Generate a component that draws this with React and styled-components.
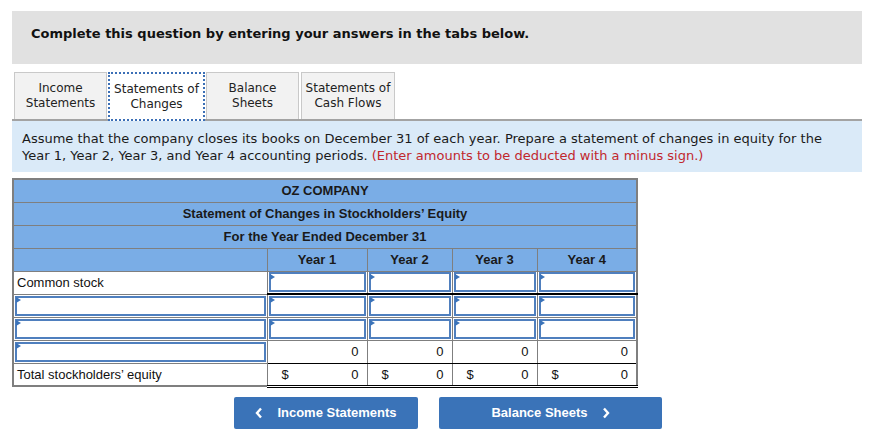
import React from "react";
import styled, { createGlobalStyle } from "styled-components";

const GlobalStyle = createGlobalStyle`
  body {
    margin: 0;
    background: #ffffff;
    font-family: "DejaVu Sans", Verdana, sans-serif;
    color: #1a1a1a;
  }
`;

const YEARS = ["Year 1", "Year 2", "Year 3", "Year 4"];
const COL_WIDTHS = [254, 100, 85, 85, 100];

//Layout components
const Page = styled.div`
  width: 850px;
  padding: 11px 0 0 12px;
`;

const Banner = styled.div`
  height: 53px;
  box-sizing: border-box;
  padding: 15px 0 0 19px;
  background-color: #e1e1e1;
  font-size: 13px;
  font-weight: bold;
  line-height: 16px;
  color: #111;
`;

const TabBar = styled.div`
  display: flex;
  align-items: flex-end;
  gap: 1px;
  margin-top: 8px;
  padding-left: 2px;
`;

const Tab = styled.div`
  width: ${(p) => p.$width}px;
  height: ${(p) => (p.$active ? 49 : 47)}px;
  box-sizing: border-box;
  display: flex;
  align-items: center;
  justify-content: center;
  text-align: center;
  font-size: 12px;
  line-height: 15px;
  color: #222;
  background-color: ${(p) => (p.$active ? "#ffffff" : "#f2f2f2")};
  border: ${(p) =>
    p.$active ? "2px dotted #3b6fb6" : "1px solid #c9c9c9"};
  border-bottom: ${(p) => (p.$active ? "2px dotted #3b6fb6" : "none")};
  margin-bottom: ${(p) => (p.$active ? "-2px" : "0")};
  position: relative;
  z-index: ${(p) => (p.$active ? 1 : 0)};
  margin-right: ${(p) => p.$gap || 0}px;
`;

const Instructions = styled.div`
  border-top: 2px solid #a3a3a3;
  background-color: #daeaf8;
  padding: 9px 10px 8px 10px;
  font-size: 13px;
  line-height: 17px;
  color: #1a1a1a;
`;

const Hint = styled.span`
  color: #c1272d;
`;

const Table = styled.table`
  margin-top: 6px;
  border-collapse: collapse;
  table-layout: fixed;
  width: 625px;
  font-family: "Liberation Sans", Arial, sans-serif;
  font-size: 13px;
  border: 2px solid #7f7f7f;
`;

const Row = styled.tr`
  height: 23px;
`;

const HeadCell = styled.th`
  padding: 0;
  background-color: #7aade6;
  border: 1px solid #7f7f7f;
  font-weight: bold;
  color: #1a1a1a;
  text-align: center;
`;

const LabelCell = styled.td`
  padding: 0 3px;
  border: 1px solid #7f7f7f;
  background: #fff;
  color: #111;
`;

const InputCell = styled.td`
  padding: 0 1px;
  border: 1px solid #7f7f7f;
  border-bottom: ${(p) => (p.$rule ? "2px solid #000" : "1px solid #7f7f7f")};
  background: #fff;
  position: relative;
`;

const Field = styled.div`
  height: 20px;
  box-sizing: border-box;
  border: 2px solid #4f7fbe;
  background: #fff;
`;

const Marker = styled.span`
  position: absolute;
  top: 2px;
  left: 2px;
  width: 0;
  height: 0;
  border-top: 3px solid transparent;
  border-bottom: 3px solid transparent;
  border-left: 5px solid #3b73b9;
`;

const AmountCell = styled.td`
  padding: 0 8px 0 14px;
  border: 1px solid #7f7f7f;
  border-bottom: ${(p) =>
    p.$double ? "3px double #000" : p.$single ? "1px solid #000" : "1px solid #7f7f7f"};
  background: #fff;
  color: #111;
`;

const Amount = styled.div`
  display: flex;
  justify-content: space-between;
`;

const ButtonRow = styled.div`
  display: flex;
  gap: 21px;
  margin-top: 9px;
  padding-left: 222px;
`;

const NavButton = styled.button`
  width: ${(p) => p.$width}px;
  height: 32px;
  display: flex;
  align-items: center;
  justify-content: center;
  gap: 14px;
  border: none;
  border-radius: 2px;
  background-color: #3a73b8;
  color: #fff;
  font-family: "Liberation Sans", Arial, sans-serif;
  font-size: 13px;
  font-weight: bold;
  cursor: pointer;
`;

const Chevron = ({ dir }) => (
  <svg width="8" height="12" viewBox="0 0 8 12">
    <polyline
      points={dir === "left" ? "6,1.5 2,6 6,10.5" : "2,1.5 6,6 2,10.5"}
      fill="none"
      stroke="#fff"
      strokeWidth="2.4"
    />
  </svg>
);

const EntryInput = ({ rule }) => (
  <InputCell $rule={rule}>
    <Field />
    <Marker />
  </InputCell>
);

function App() {
  return (
    <>
      <GlobalStyle />
      <Page>
        <Banner>
          Complete this question by entering your answers in the tabs below.
        </Banner>
        <TabBar>
          <Tab $width={93}>
            Income
            <br />
            Statements
          </Tab>
          <Tab $width={97} $active>
            Statements of
            <br />
            Changes
          </Tab>
          <Tab $width={93} $gap={1}>
            Balance
            <br />
            Sheets
          </Tab>
          <Tab $width={94}>
            Statements of
            <br />
            Cash Flows
          </Tab>
        </TabBar>
        <Instructions>
          Assume that the company closes its books on December 31 of each year.
          Prepare a statement of changes in equity for the Year 1, Year 2, Year
          3, and Year 4 accounting periods.{" "}
          <Hint>(Enter amounts to be deducted with a minus sign.)</Hint>
        </Instructions>
        <Table>
          <colgroup>
            {COL_WIDTHS.map((w, i) => (
              <col key={i} style={{ width: w }} />
            ))}
          </colgroup>
          <thead>
            <Row>
              <HeadCell colSpan={5}>OZ COMPANY</HeadCell>
            </Row>
            <Row>
              <HeadCell colSpan={5}>
                Statement of Changes in Stockholders’ Equity
              </HeadCell>
            </Row>
            <Row>
              <HeadCell colSpan={5}>For the Year Ended December 31</HeadCell>
            </Row>
            <Row>
              <HeadCell />
              {YEARS.map((y) => (
                <HeadCell key={y}>{y}</HeadCell>
              ))}
            </Row>
          </thead>
          <tbody>
            <Row>
              <LabelCell>Common stock</LabelCell>
              {YEARS.map((y) => (
                <EntryInput key={y} rule />
              ))}
            </Row>
            {[0, 1].map((r) => (
              <Row key={r}>
                <EntryInput />
                {YEARS.map((y) => (
                  <EntryInput key={y} />
                ))}
              </Row>
            ))}
            <Row>
              <EntryInput />
              {YEARS.map((y) => (
                <AmountCell key={y} $single>
                  <Amount>
                    <span />
                    <span>0</span>
                  </Amount>
                </AmountCell>
              ))}
            </Row>
            <Row>
              <LabelCell>Total stockholders’ equity</LabelCell>
              {YEARS.map((y) => (
                <AmountCell key={y} $double>
                  <Amount>
                    <span>$</span>
                    <span>0</span>
                  </Amount>
                </AmountCell>
              ))}
            </Row>
          </tbody>
        </Table>
        <ButtonRow>
          <NavButton $width={184}>
            <Chevron dir="left" />
            Income Statements
          </NavButton>
          <NavButton $width={223}>
            Balance Sheets
            <Chevron dir="right" />
          </NavButton>
        </ButtonRow>
      </Page>
    </>
  );
}

export default App;
